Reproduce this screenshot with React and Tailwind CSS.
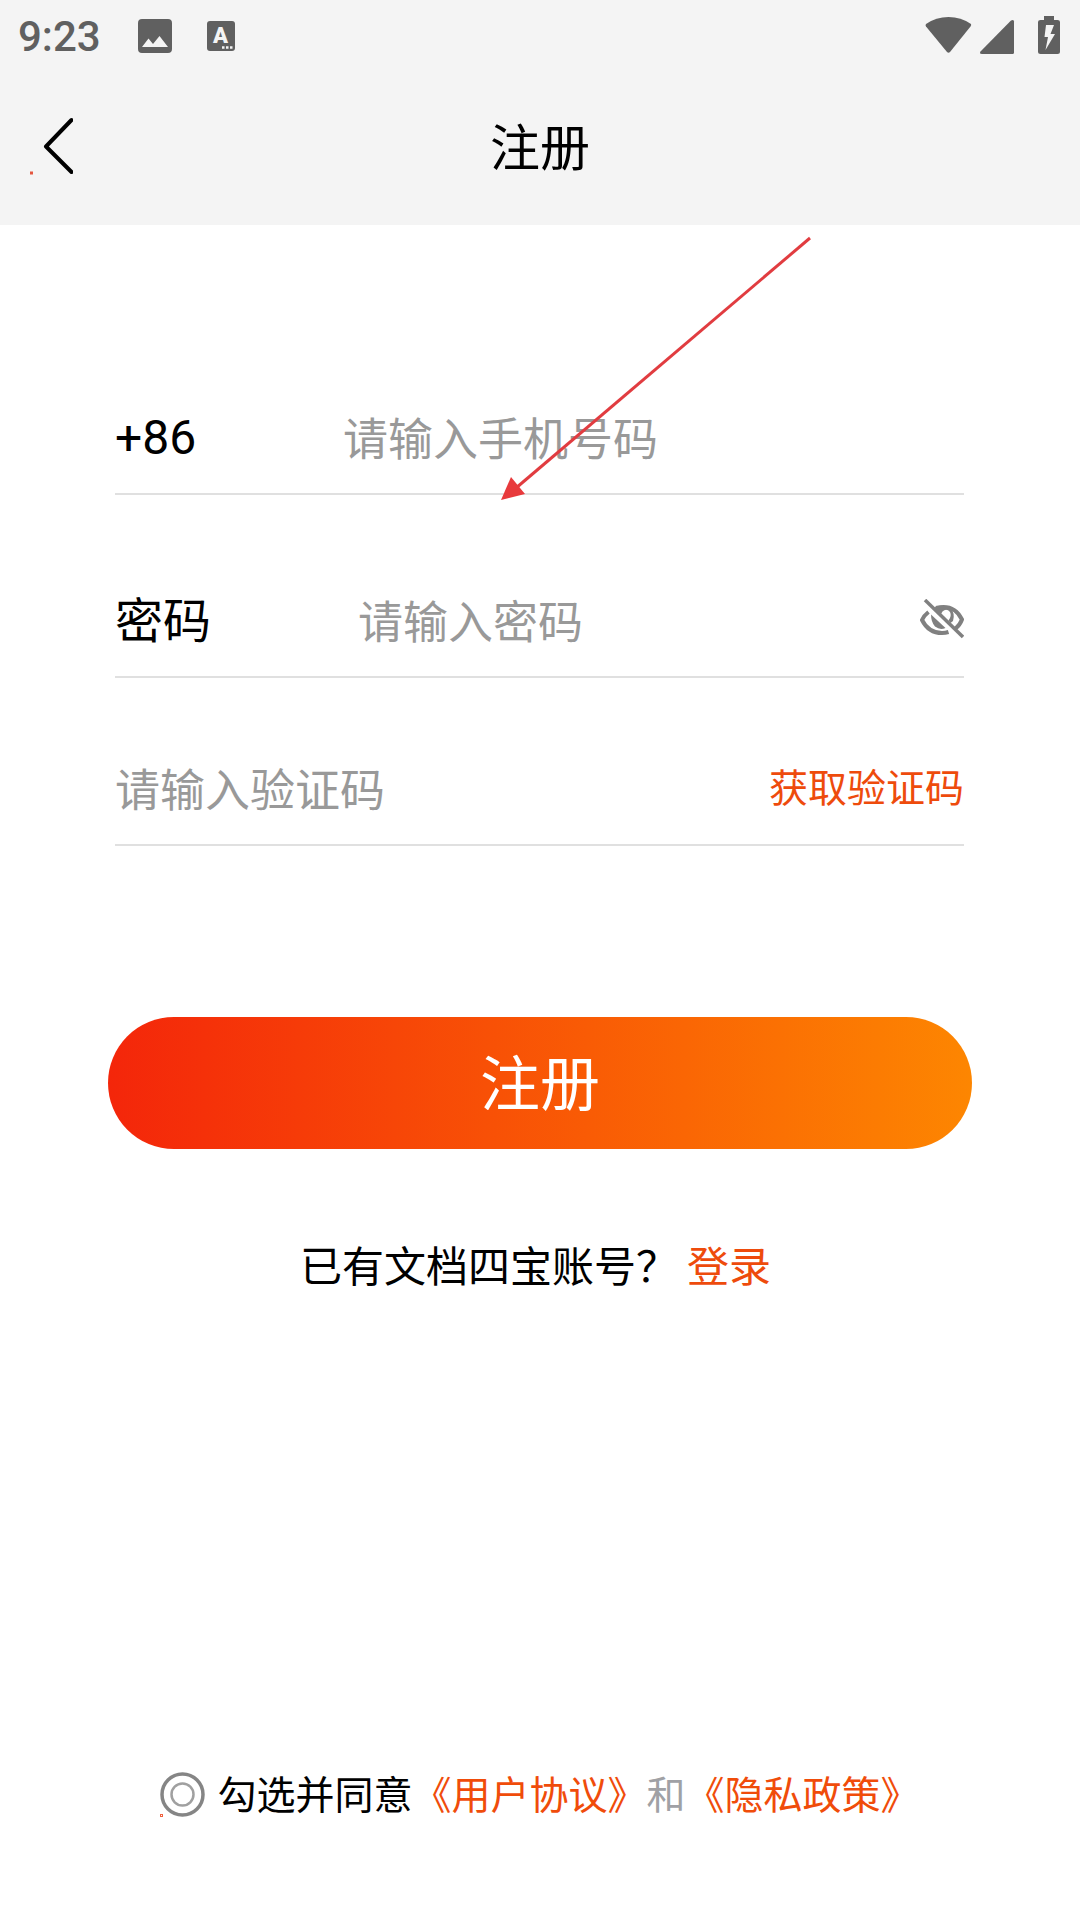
import React, { useState } from 'react';

const StatusBar = () => (
  <div className="flex h-[72px] items-center pl-[18px] pr-[19px] text-[#606060]">
    <span className="pt-0.5 font-[Roboto] text-[42px] font-medium leading-none">9:23</span>
    <svg className="ml-[37px] h-[34px] w-[34px]" viewBox="0 0 34 34" fill="currentColor">
      <path fillRule="evenodd" d="M4 0H30Q34 0 34 4V30Q34 34 30 34H4Q0 34 0 30V4Q0 0 4 0ZM4 28H30L21.500 17L15 25L10.500 19.500Z" />
    </svg>
    <svg className="ml-[35px] h-[30px] w-7" viewBox="0 0 28 30">
      <rect width="28" height="30" rx="3" fill="currentColor" />
      <text x="13.500" y="22" textAnchor="middle" className="fill-[#f4f4f4] font-[Roboto] text-[22px] font-black">A</text>
      <path d="M15 26.500h2.500M19 26.500h2.500M23 26.500h2.500" stroke="#f4f4f4" strokeWidth="2.500" />
    </svg>
    <svg className="ml-auto h-10 w-[136px]" viewBox="0 0 136 40" fill="currentColor">
      <path d="M1 8Q11 1 23.500 1T46 8Q46.500 9 45.500 10.500L25 36Q23.500 37.500 22 36L1 10.500Q0 9 1 8Z" />
      <path d="M86 4.500Q89 3 89 5.500V36.500Q89 38 87.500 38H57Q54 38 55.500 35.500Z" />
      <path fillRule="evenodd" d="M119 0H129V4H132.500Q135 4 135 6V35.500Q135 38 132.500 38H115.500Q113 38 113 35.500V6Q113 4 115.500 4H119ZM121 9L119.500 21H123L120.500 34L130 18H125.500L129 9Z" />
    </svg>
  </div>
);

const EyeOffIcon = () => (
  <svg className="h-10 w-11" viewBox="0 0 44 40" fill="none" stroke="#808080">
    <path d="M8.500 13Q4 16.500 2 21Q8.500 34 22 34Q25.500 34 28.500 33" strokeWidth="4" />
    <path d="M16 9Q34 4.500 42 20.500Q40 26 35.500 29.500" strokeWidth="4" />
    <path d="M11 15.500L25.500 29Q20 31.500 15 27.500Q11 23 11 15.500Z" fill="#808080" stroke="none" />
    <path d="M14 8.500Q22 5 30 9Q35.500 14 33 22L30.500 24L28.500 21.500Q32 17 30 13Q26.500 9 22.500 12.500L21 15Z" fill="#808080" stroke="none" />
    <path d="M5 1L43 38" strokeWidth="3.500" />
  </svg>
);

const Field = ({ id, label, labelClass, children, className, ...input }) => (
  <div className={`flex h-[116px] items-center border-b-2 border-[#e0e0e0] ${className}`}>
    {label && (
      <label htmlFor={id} className={`${labelClass} shrink-0 text-[48px] leading-[60px] text-black`}>{label}</label>
    )}
    <input
      id={id}
      className="h-[70px] min-w-0 flex-1 bg-transparent text-[45px] text-black outline-none placeholder:text-[#999999]"
      {...input}
    />
    {children}
  </div>
);

export default function App() {
  const [showPassword, setShowPassword] = useState(false);

  return (
    <div lang="zh-CN" className="relative flex min-h-screen flex-col bg-white font-['Noto_Sans_CJK_SC',sans-serif]">
      <header className="bg-[#f4f4f4] pb-[5px]">
        <StatusBar />
        <div className="grid h-[148px] grid-cols-3 items-center">
          <button type="button" aria-label="返回" className="ml-[29px] w-11">
            <svg className="h-[58px] w-11" viewBox="0 0 44 58" fill="none">
              <path d="M42.500 3L17 29.500L42.500 55" stroke="#000" strokeWidth="4" strokeLinecap="round" strokeLinejoin="round" />
              <rect x="1.500" y="55" width="2" height="2" stroke="#e4563f" />
            </svg>
          </button>
          <h1 className="pb-1 text-center text-[50px] leading-[60px] text-black">注册</h1>
        </div>
      </header>

      <form className="flex flex-1 flex-col" onSubmit={(e) => e.preventDefault()}>
        <div className="flex flex-col pl-[115px] pr-[116px]">
          <Field id="phone" label="+86" labelClass="w-[228px] pt-1 font-[Roboto]" type="tel" placeholder="请输入手机号码" className="mt-[154px]" />
          <Field id="password" label="密码" labelClass="w-[243px] pb-1" type={showPassword ? 'text' : 'password'} placeholder="请输入密码" className="mt-[67px]">
            <button type="button" aria-label="显示密码" onClick={() => setShowPassword(!showPassword)}>
              <EyeOffIcon />
            </button>
          </Field>
          <Field id="code" aria-label="验证码" placeholder="请输入验证码" className="mt-[52px]">
            <button type="button" className="shrink-0 pb-1 text-[39px] leading-[60px] text-[#ee4b0c]">获取验证码</button>
          </Field>
        </div>

        <button type="submit" className="mx-[108px] mt-[171px] h-[132px] rounded-full bg-linear-to-r/srgb from-[#f4260a] to-[#fd8601] pb-1.5 text-[60px] text-white">
          注册
        </button>

        <p className="mt-[85px] flex justify-center text-[42px] leading-[60px] text-black">
          已有文档四宝账号？
          <a href="#login" className="px-[9px] text-[#ee4b0c]">登录</a>
        </p>

        <div className="mt-auto flex items-center justify-center pb-[94px] text-[39px] leading-[60px] text-black">
          <span className="relative mr-3 h-[45px] w-[45px]">
            <input id="agree" type="checkbox" className="peer absolute inset-0 h-full w-full cursor-pointer appearance-none" />
            <svg className="pointer-events-none h-[45px] w-[45px] fill-none peer-checked:fill-[#ee4b0c]" viewBox="0 0 45 45">
              <circle cx="22.500" cy="22.500" r="20.500" stroke="#858585" strokeWidth="3.500" fill="none" />
              <circle cx="22.500" cy="22.500" r="11" stroke="#a0a0a0" strokeWidth="2.500" />
              <rect x="0.500" y="42.500" width="2" height="2" fill="none" stroke="#f0623f" />
            </svg>
          </span>
          <div className="flex pb-1">
            <label htmlFor="agree">勾选并同意</label>
            <a href="#terms" className="text-[#f04c0a]">《用户协议》</a>
            <span className="text-[#a0a1a5]">和</span>
            <a href="#privacy" className="text-[#f04c0a]">《隐私政策》</a>
          </div>
        </div>
      </form>

      {/* hint arrow over the form */}
      <svg className="pointer-events-none absolute left-[500px] top-[236px] h-[266px] w-[312px]" viewBox="0 0 312 266">
        <path d="M310 2L16 252" stroke="#e13c40" strokeWidth="3" />
        <path d="M1 264L11 241L25 258Z" fill="#e83a3c" />
      </svg>
    </div>
  );
}
